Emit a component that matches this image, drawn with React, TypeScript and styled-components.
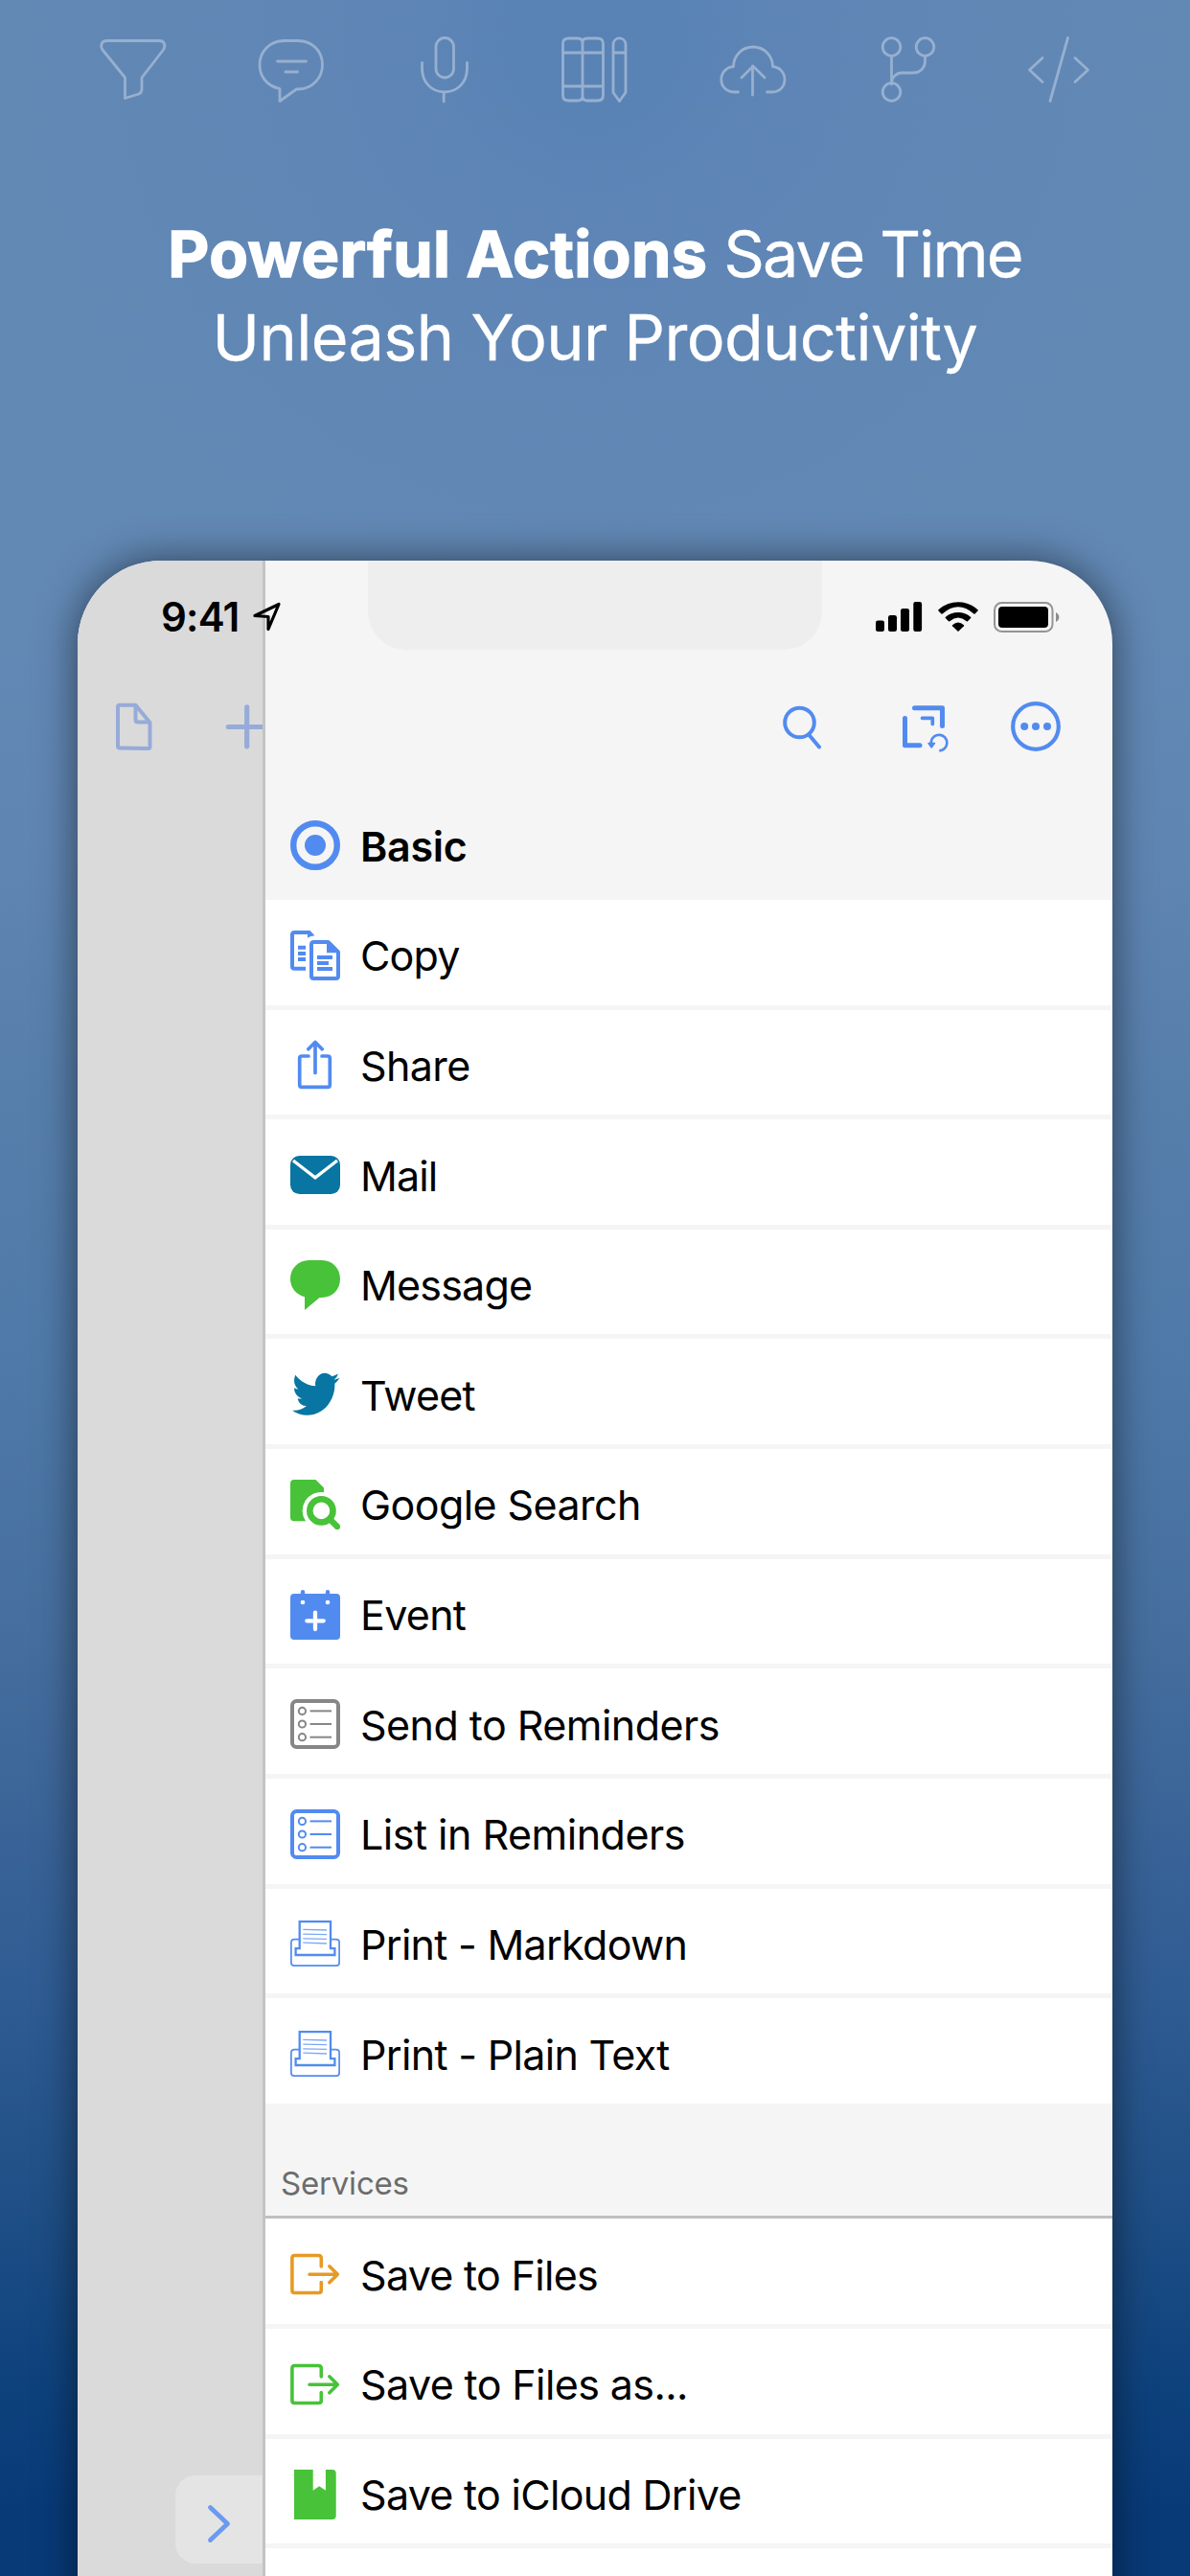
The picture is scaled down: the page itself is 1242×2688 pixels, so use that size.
import React from "react";
import styled, { createGlobalStyle } from "styled-components";

const BLUE = "#528bf0";
const GREEN = "#48c239";
const TEAL = "#0875a2";
const ORANGE = "#e69a25";
const GRAY = "#868686";

const GlobalStyle = createGlobalStyle`
  * { box-sizing: border-box; }
  body { margin: 0; }
`;

const Page = styled.main`
  width: 1242px;
  height: 2688px;
  overflow: hidden;
  font-family: Inter, "Liberation Sans", sans-serif;
  background:
    radial-gradient(circle at 620px 40px, rgba(80, 125, 182, 0.55), rgba(90, 130, 184, 0.35) 280px, rgba(98, 136, 180, 0) 600px),
    linear-gradient(
      180deg,
      #6288b4 0, #6288b4 640px, #5f85b2 900px, #577fac 1130px, #4f79a8 1420px,
      #466f9f 1700px, #3d6699 1860px, #2f5c93 2075px, #1f4f86 2300px,
      #0d417c 2500px, #083a78 2620px
    );
`;

const FeatureStrip = styled.div`
  display: grid;
  grid-template-columns: 165px 169px 148px 165px 168px 153px 70px;
  height: 146px;
  padding: 36px 0 0 104px;
  svg { display: block; height: 73px; overflow: visible; }
`;

const StripIcon = styled.svg`
  fill: none;
  stroke: #97b0d0;
  stroke-width: 2.8;
  stroke-linecap: round;
  stroke-linejoin: round;
`;

const Headline = styled.h1`
  height: 439px;
  margin: 0;
  padding-top: 76px;
  color: #fff;
  font-size: 66.5px;
  line-height: 87px;
  font-weight: 400;
  text-align: center;
  white-space: nowrap;
`;

const HeadlinePart = styled.span<{ $spacing: number; $strong?: boolean }>`
  font-weight: ${(p) => (p.$strong ? 700 : 400)};
  letter-spacing: ${(p) => p.$spacing}px;
  -webkit-text-stroke: ${(p) => (p.$strong ? 1.5 : 0.3)}px #fff;
  stroke-linejoin: round;
`;

const Phone = styled.section`
  position: relative;
  display: grid;
  grid-template-columns: 193px 1fr;
  width: 1080px;
  height: 2200px;
  border-radius: 87px;
  overflow: hidden;
  background: #f5f5f5;
`;

const PhoneShadow = styled.div`
  height: 2200px;
  width: 1080px;
  margin: 0 81px;
  border-radius: 87px;
  box-shadow: 0 0 42px rgba(0, 0, 0, 0.53);
`;

const Notch = styled.div`
  position: absolute;
  left: 303px;
  top: 0;
  width: 474px;
  height: 93px;
  border-radius: 0 0 40px 40px;
  background: #eee;
`;

const StatusBar = styled.header`
  position: absolute;
  inset: 0 0 auto 0;
  display: flex;
  align-items: center;
  height: 117px;
  padding: 0 54px 0 87px;
`;

const Clock = styled.time`
  width: 96px;
  color: #000;
  font-size: 42px;
  font-weight: 600;
  letter-spacing: -0.8px;
`;

const StatusIcons = styled.div`
  display: flex;
  align-items: center;
  gap: 16px;
  margin-left: auto;
`;

const Underlay = styled.aside`
  display: flex;
  flex-direction: column;
  justify-content: space-between;
  padding: 146px 0 13px;
  background: #dadada;
`;

const UnderlayTools = styled.div`
  display: flex;
  padding-left: 38px;
  gap: 74px;
  overflow: hidden;
  svg { flex: none; }
`;

const Handle = styled.button`
  align-self: flex-end;
  display: flex;
  align-items: center;
  width: 91px;
  height: 92px;
  margin-bottom: 97px;
  padding: 10px 0 0 32px;
  border: 0;
  border-radius: 21px 0 0 21px;
  background: #e4e4e4;
`;

const Panel = styled.div`
  border-left: 3px solid #c3c3c3;
`;

const Toolbar = styled.nav`
  display: flex;
  justify-content: flex-end;
  height: 239.36px;
  padding: 147px 54px 0 0;
  gap: 64px;
`;

const SearchGlyph = styled.svg`
  margin-right: 19px;
`;

const Row = styled.div<{ $header?: boolean }>`
  display: flex;
  align-items: center;
  height: 114.64px;
  padding: ${(p) => (p.$header ? 1 : 6)}px 0 0 26px;
  border-bottom: ${(p) => (p.$header ? "none" : "5px solid #f5f5f5")};
  background: ${(p) => (p.$header ? "#f5f5f5" : "#fff")};
  svg { flex: none; }
`;

const Label = styled.span<{ $bold?: boolean; $spacing: number }>`
  padding: 1px 0 0 21px;
  color: #000;
  font-size: 43px;
  line-height: 52px;
  font-weight: ${(p) => (p.$bold ? 600 : 400)};
  letter-spacing: ${(p) => p.$spacing}px;
  white-space: nowrap;
`;

const SectionTitle = styled.h2`
  height: 115.6px;
  margin: 0;
  padding: 58px 0 0 16px;
  border-bottom: 3px solid #c0c0c0;
  background: #f5f5f5;
  color: #6c6c6c;
  font-size: 33px;
  line-height: 40px;
  font-weight: 400;
  letter-spacing: -0.2px;
`;

const Glyph = ({ children }: { children: React.ReactNode }) => (
  <svg width="52" height="52" viewBox="0 0 52 52" fill="none" strokeLinejoin="round">
    {children}
  </svg>
);

const TargetIcon = () => (
  <Glyph>
    <circle cx="26" cy="26" r="22.8" stroke={BLUE} strokeWidth="6.4" />
    <circle cx="26" cy="26" r="11" fill={BLUE} />
  </Glyph>
);

const CopyIcon = () => (
  <Glyph>
    <path d="M16 39.8H4.5Q2 39.8 2 37.5V4.3Q2 2 4.5 2H20" stroke={BLUE} strokeWidth="4" />
    <path d="M18 0h2.5l5 5.2q-4.500 0-7.500 2.500z" fill={BLUE} />
    <path d="M8 15.7h8v4H8zM8 22h8v4H8zM8 28h8v4H8z" fill={BLUE} />
    <path d="M24.500 12H39.500L50 22.500V47.500Q50 50 47.500 50H24.500Q22 50 22 47.500V14.500Q22 12 24.500 12Z" stroke={BLUE} strokeWidth="4" />
    <path d="M38 11h2.500L51 21.500V23.300H38z" fill={BLUE} />
    <path d="M28 26h16v4H28zM28 32h12v4H28zM28 38h16v4H28z" fill={BLUE} />
  </Glyph>
);

const ShareIcon = () => (
  <Glyph>
    <path
      d="M19 17H12Q9.700 17 9.700 19.300V47Q9.700 49.400 12 49.400H39Q41.300 49.400 41.300 47V19.300Q41.300 17 39 17H33M26 3V34.500M18.800 9.700 26 2.500 33.200 9.700"
      stroke={BLUE} strokeWidth="3.700" strokeLinecap="round"
    />
  </Glyph>
);

const MailIcon = () => (
  <Glyph>
    <rect y="6" width="52" height="40" rx="9.500" fill={TEAL} />
    <path d="M3 11 26 28.800 49 11" stroke="#fff" strokeWidth="3.300" strokeLinejoin="miter" />
  </Glyph>
);

const MessageIcon = () => (
  <Glyph>
    <path d="M19.500 0H33C44 0 52 8.500 52 19.500S44 39 33 39H30.500L15 52V38.200C6 36 0 28.500 0 19.500 0 8.500 8.500 0 19.500 0Z" fill={GREEN} />
  </Glyph>
);

const BirdIcon = () => (
  <Glyph>
    <g transform="translate(2 -1.300) scale(2.060 2.250)">
      <path
        fill={TEAL}
        d="M23.953 4.570a10 10 0 01-2.825.775 4.958 4.958 0 002.163-2.723c-.951.555-2.005.959-3.127 1.184a4.920 4.920 0 00-8.384 4.482C7.690 8.095 4.067 6.130 1.640 3.162a4.822 4.822 0 00-.666 2.475c0 1.710.870 3.213 2.188 4.096a4.904 4.904 0 01-2.228-.616v.060a4.923 4.923 0 003.946 4.827 4.996 4.996 0 01-2.212.085 4.936 4.936 0 004.604 3.417 9.867 9.867 0 01-6.102 2.105c-.390 0-.779-.023-1.170-.067a13.995 13.995 0 007.557 2.209c9.053 0 13.998-7.496 13.998-13.985 0-.210 0-.420-.015-.630A9.935 9.935 0 0024 4.590z"
      />
    </g>
  </Glyph>
);

const DocSearchIcon = () => (
  <Glyph>
    <path d="M4 0H26.500L35 8.500V13.200A19.400 19.400 0 0 0 16 43.300H4Q0 43.300 0 39.300V4Q0 0 4 0Z" fill={GREEN} />
    <circle cx="32.400" cy="32.400" r="12.100" stroke={GREEN} strokeWidth="6.600" />
    <path d="M42 42 49 49" stroke={GREEN} strokeWidth="6.400" strokeLinecap="round" />
  </Glyph>
);

const EventIcon = () => (
  <Glyph>
    <rect y="4" width="52" height="48" rx="4" fill={BLUE} />
    <path d="M13 2.200V6M39 2.200V6" stroke={BLUE} strokeWidth="4.400" strokeLinecap="round" />
    <circle cx="13" cy="13" r="2.300" fill="#fff" />
    <circle cx="39" cy="13" r="2.300" fill="#fff" />
    <path d="M17.300 32.300H34.700M26 23.600V41" stroke="#fff" strokeWidth="4.300" strokeLinecap="round" />
  </Glyph>
);

const ListIcon = ({ color }: { color: string }) => (
  <Glyph>
    <rect x="2" y="2" width="48" height="48" rx="4.500" stroke={color} strokeWidth="4" />
    {[12.4, 26, 39.7].map((y) => (
      <g key={y} stroke={color} strokeWidth="2">
        <circle cx="12.400" cy={y} r="3.600" />
        <path d={`M20.500 ${y}H43`} />
      </g>
    ))}
  </Glyph>
);

const PrinterIcon = () => (
  <Glyph>
    <path d="M9 21.700H4.500Q.900 21.700 .900 25V46Q.900 49.200 4 49.200H48Q51.100 49.200 51.100 46V25Q51.100 21.700 47.500 21.700H43" stroke={BLUE} strokeWidth="1.700" />
    <path d="M9.700 3.200H42V31.200H46.400V38H5.600V31.200H9.700Z" stroke={BLUE} strokeWidth="2.300" strokeLinejoin="miter" />
    <path d="M13.300 11.400 38 12M13.300 16.100 38 16.700M13.300 20.800 38 21.400M13.300 25.200 38 26" stroke={BLUE} strokeWidth="1.300" opacity="0.750" />
  </Glyph>
);

const ExportIcon = ({ color }: { color: string }) => (
  <Glyph>
    <path
      d="M32.300 18V9.500Q32.300 6.500 29.500 6.500H4.500Q1.900 6.500 1.900 9.500V42.700Q1.900 45.500 4.500 45.500H29.500Q32.300 45.500 32.300 42.700V34.500M20 26.300H49M40.800 17.800 49.300 26.300 40.800 34.800"
      stroke={color} strokeWidth="3.600" strokeLinecap="round"
    />
  </Glyph>
);

const BookIcon = () => (
  <Glyph>
    <path d="M4 0H23.700V21.800L30.200 17.300 36.900 21.800V0H43.700Q47.700 0 47.700 4V48Q47.700 52 43.700 52H4Z" fill={GREEN} />
  </Glyph>
);

type Action = { label: string; icon: React.ReactNode; spacing: number };

const basicActions: Action[] = [
  { label: "Copy", icon: <CopyIcon />, spacing: -0.8 },
  { label: "Share", icon: <ShareIcon />, spacing: -0.6 },
  { label: "Mail", icon: <MailIcon />, spacing: -0.9 },
  { label: "Message", icon: <MessageIcon />, spacing: -0.8 },
  { label: "Tweet", icon: <BirdIcon />, spacing: -0.8 },
  { label: "Google Search", icon: <DocSearchIcon />, spacing: -0.58 },
  { label: "Event", icon: <EventIcon />, spacing: -0.7 },
  { label: "Send to Reminders", icon: <ListIcon color={GRAY} />, spacing: -0.53 },
  { label: "List in Reminders", icon: <ListIcon color={BLUE} />, spacing: -0.5 },
  { label: "Print - Markdown", icon: <PrinterIcon />, spacing: -0.72 },
  { label: "Print - Plain Text", icon: <PrinterIcon />, spacing: -0.68 },
];

const serviceActions: Action[] = [
  { label: "Save to Files", icon: <ExportIcon color={ORANGE} />, spacing: -0.7 },
  { label: "Save to Files as...", icon: <ExportIcon color={GREEN} />, spacing: -0.6 },
  { label: "Save to iCloud Drive", icon: <BookIcon />, spacing: -0.7 },
];

const ActionRow = ({ label, icon, spacing }: Action) => (
  <Row>
    {icon}
    <Label $spacing={spacing}>{label}</Label>
  </Row>
);

export default function App() {
  return (
    <Page>
      <GlobalStyle />
      <FeatureStrip>
        <StripIcon width="70" viewBox="0 0 70 73">
          <path d="M7.500 6.500H62C68 6.500 69 12 66.500 16L44 45V57Q44 60.500 41 62L26.500 66.500V45L3 16C.500 12 1.500 6.500 7.500 6.500Z" />
        </StripIcon>
        <StripIcon width="70" viewBox="0 0 70 73">
          <path d="M27.500 6.500H42C57 6.500 67.500 17.500 67.500 31.500S57 57 42 57H40.500L23 69.500V56.500C10 54 2 44 2 31.500 2 17.500 13 6.500 27.500 6.500ZM20.500 28H50.500M29 39H41.500" />
        </StripIcon>
        <StripIcon width="52" viewBox="0 0 52 73">
          <rect x="17" y="3.500" width="18.500" height="41.500" rx="9.250" />
          <path d="M2.500 29.500V35C2.500 50 12.500 60 26 60S49.500 50 49.500 35V29.500M25.200 60V70" />
        </StripIcon>
        <StripIcon width="70" viewBox="0 0 70 73">
          <path d="M7.500 4H17Q22 4 22 9V64.500Q22 69 17 69H7.500Q1.500 69 1.500 63.500V9.500Q1.500 4 7.500 4ZM27 4H37.500Q43.500 4 43.500 9.500V63.500Q43.500 69 37.500 69H27Q22 69 22 64.500V9Q22 4 27 4ZM1.500 19H43.500M1.500 54H43.500M54 19H67M54 11C54 1.500 67 1.500 67 11V60.500L60.500 69.500 54 60.500Z" />
        </StripIcon>
        <StripIcon width="70" viewBox="0 0 70 73">
          <path d="M19.500 60H15C7 60 1.800 54 1.800 47 1.800 40 7 34 14.500 33.500 14.500 22 23.500 13 35 13S55.500 22 55.500 33.500C63 34 68 40 68 47 68 54 63 60 55 60H49.500M34.500 63V33M23 45 35 33 47 45" />
        </StripIcon>
        <StripIcon width="58" viewBox="0 0 58 73">
          <circle cx="11.500" cy="13" r="9.300" />
          <circle cx="46.500" cy="13" r="9.300" />
          <circle cx="11.500" cy="60" r="9.300" />
          <path d="M11.500 22.500V52C11.500 44 17 40 22 40H34C42 40 46.500 34 46.500 28V22.500" />
        </StripIcon>
        <StripIcon width="66" viewBox="0 0 66 73">
          <path d="M16 24.500 2.500 37 16 49.500M42.500 3.500 24 69.500M50 24.500 63.500 37 50 49.500" />
        </StripIcon>
      </FeatureStrip>

      <Headline>
        <HeadlinePart as="strong" $strong $spacing={0.4}>Powerful Actions</HeadlinePart>
        <HeadlinePart $spacing={-1.9}> Save Time</HeadlinePart>
        <br />
        <HeadlinePart $spacing={-0.6}>Unleash Your Productivity</HeadlinePart>
      </Headline>

      <PhoneShadow>
        <Phone>
          <Underlay>
            <UnderlayTools>
              <svg width="42" height="56" viewBox="0 0 42 56" fill="none" stroke="#97abd9" strokeWidth="4" strokeLinejoin="round">
                <path d="M6 4.700H22.500L37.500 23V48.500Q37.500 50 35.500 50L6 49.500Q4 49.500 4 47.500V6.700Q4 4.700 6 4.700ZM22.500 4.700V20Q22.500 22.500 25 22.500H37" />
              </svg>
              <svg width="48" height="56" viewBox="0 0 48 56" fill="none" stroke="#97abd9" strokeWidth="5.200" strokeLinecap="round">
                <path d="M3.300 27.500H44M22.700 6.800V47.800" />
              </svg>
            </UnderlayTools>
            <Handle aria-label="Next">
              <svg width="30" height="44" viewBox="0 0 30 44" fill="none" stroke="#6b9af0" strokeWidth="4.800" strokeLinecap="round" strokeLinejoin="round">
                <path d="M4.500 4.500 22.500 21.500 4.500 38.500" />
              </svg>
            </Handle>
          </Underlay>

          <Panel>
            <Toolbar>
              <SearchGlyph width="42" height="52" viewBox="0 0 42 52" fill="none" stroke={BLUE} strokeWidth="4" strokeLinecap="round">
                <circle cx="18.500" cy="22" r="15.300" />
                <path d="M28.500 35 39 47.500" />
              </SearchGlyph>
              <svg width="50" height="56" viewBox="0 0 50 56" fill="none" stroke={BLUE} strokeWidth="5" strokeLinecap="round" strokeLinejoin="round">
                <path d="M13.500 6.700H42.500V25.500M3.500 17.500V45.700H19" />
                <path d="M21.500 17.300H32.300V23.500" strokeWidth="3.700" />
                <path d="M30.900 45.500V41.500A8.300 8.300 0 1 1 39.300 51.400" strokeWidth="2.700" strokeLinecap="butt" />
                <path d="M28 43.500H34.500L31.200 48Z" fill={BLUE} strokeWidth="1.500" />
              </svg>
              <svg width="52" height="52" viewBox="0 0 52 52" fill={BLUE}>
                <circle cx="26" cy="26" r="23.800" fill="none" stroke={BLUE} strokeWidth="4.200" />
                <circle cx="14.200" cy="26" r="4" />
                <circle cx="26" cy="26" r="4" />
                <circle cx="38" cy="26" r="4" />
              </svg>
            </Toolbar>
            <Row $header>
              <TargetIcon />
              <Label $bold $spacing={-0.3}>Basic</Label>
            </Row>
            {basicActions.map((a) => <ActionRow key={a.label} {...a} />)}
            <SectionTitle>Services</SectionTitle>
            {serviceActions.map((a) => <ActionRow key={a.label} {...a} />)}
            <Row />
          </Panel>

          <Notch />
          <StatusBar>
            <Clock>9:41</Clock>
            <svg width="30" height="32" viewBox="0 0 30 32" fill="none" stroke="#000" strokeWidth="3.200" strokeLinejoin="round">
              <path d="M2 14.500 27 2.500 16 28.500V15.500Z" />
            </svg>
            <StatusIcons>
              <svg width="49" height="31" viewBox="0 0 49 31">
                <rect x="0" y="19.500" width="9" height="11.500" rx="2.300" />
                <rect x="13" y="14" width="9" height="17" rx="2.300" />
                <rect x="26" y="7" width="9" height="24" rx="2.300" />
                <rect x="39.300" y="0" width="8.800" height="31" rx="2.300" />
              </svg>
              <svg width="42" height="31" viewBox="0 0 42 31">
                <path d="M.400 8.300C12-2.600 30-2.600 41.600 8.300Q42 8.900 41.500 9.400L38.500 12.600Q38 13 37.400 12.600 21-2 4.600 12.600 4 13 3.500 12.600L.500 9.400Q0 8.900 .400 8.300Z" />
                <path d="M7.700 16C15 9.200 27 9.200 34.300 16Q34.700 16.500 34.200 17L31 20.200Q30.400 20.600 29.800 20.200 21 12.800 12.200 20.200 11.600 20.600 11 20.200L7.800 17Q7.300 16.500 7.700 16Z" />
                <path d="M15 24.200Q21 19 27 24.200 27.400 24.700 27 25.200L21.600 30.600Q21 31.200 20.400 30.600L15 25.200Q14.600 24.700 15 24.200Z" />
              </svg>
              <svg width="70" height="32" viewBox="0 0 70 32">
                <rect x="1" y="1" width="60.500" height="30" rx="7.500" fill="none" stroke="#949494" strokeWidth="2" />
                <rect x="5" y="5" width="52" height="22" rx="4" />
                <path d="M65 11C69.500 13 69.500 19 65 21Z" fill="#8d8d8d" />
              </svg>
            </StatusIcons>
          </StatusBar>
        </Phone>
      </PhoneShadow>
    </Page>
  );
}
